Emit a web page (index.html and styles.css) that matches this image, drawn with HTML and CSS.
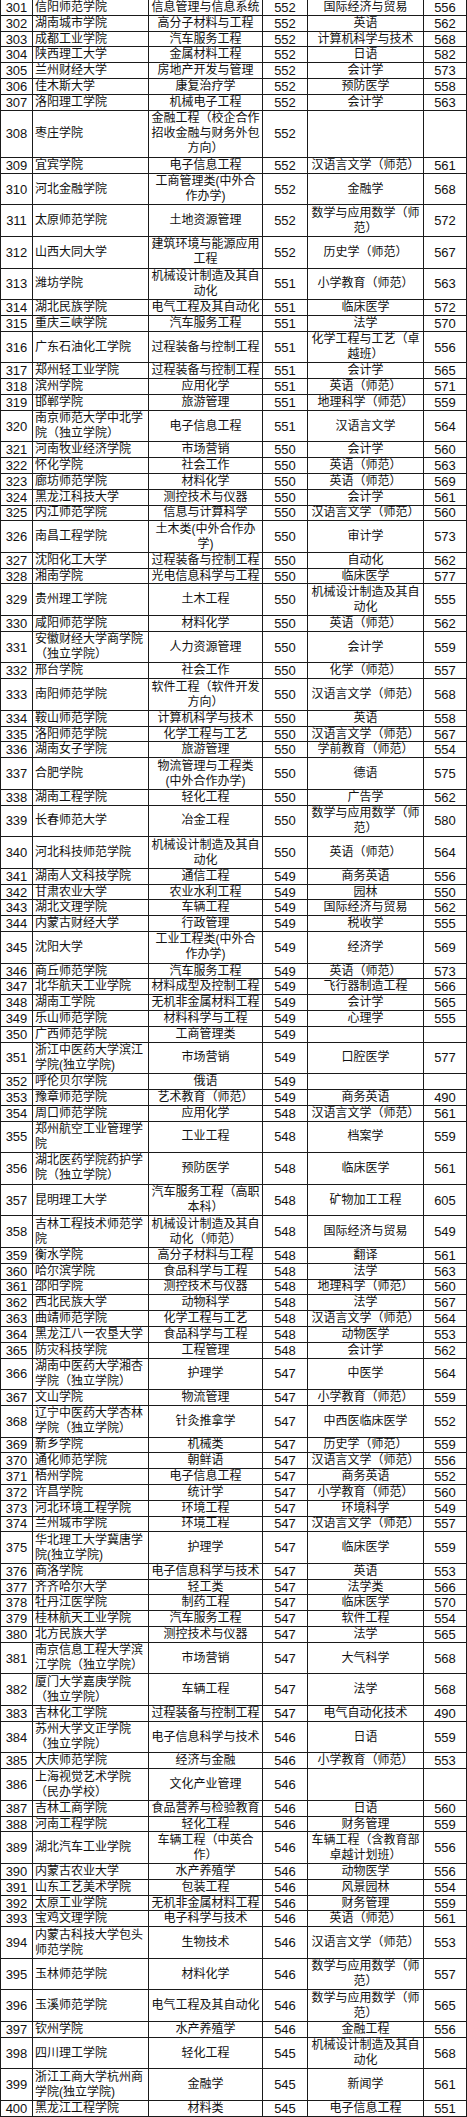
FILE: index.html
```html
<!DOCTYPE html>
<html lang="zh-CN">
<head>
<meta charset="utf-8">
<title>录取分数表</title>
<link rel="stylesheet" href="styles.css">
</head>
<body>
<div class="sheet">
<div class="r"><span>301</span><span>信阳师范学院</span><span>信息管理与信息系统</span><span>552</span><span>国际经济与贸易</span><span>556</span></div>
<div class="r"><span>302</span><span>湖南城市学院</span><span>高分子材料与工程</span><span>552</span><span>英语</span><span>562</span></div>
<div class="r"><span>303</span><span>成都工业学院</span><span>汽车服务工程</span><span>552</span><span>计算机科学与技术</span><span>568</span></div>
<div class="r"><span>304</span><span>陕西理工大学</span><span>金属材料工程</span><span>552</span><span>日语</span><span>582</span></div>
<div class="r"><span>305</span><span>兰州财经大学</span><span>房地产开发与管理</span><span>552</span><span>会计学</span><span>573</span></div>
<div class="r"><span>306</span><span>佳木斯大学</span><span>康复治疗学</span><span>552</span><span>预防医学</span><span>558</span></div>
<div class="r"><span>307</span><span>洛阳理工学院</span><span>机械电子工程</span><span>552</span><span>会计学</span><span>563</span></div>
<div class="r h3"><span>308</span><span>枣庄学院</span><span>金融工程（校企合作<br>招收金融与财务外包<br>方向）</span><span>552</span><span></span><span></span></div>
<div class="r"><span>309</span><span>宜宾学院</span><span>电子信息工程</span><span>552</span><span>汉语言文学（师范）</span><span>561</span></div>
<div class="r h2"><span>310</span><span>河北金融学院</span><span>工商管理类(中外合<br>作办学)</span><span>552</span><span>金融学</span><span>568</span></div>
<div class="r h2"><span>311</span><span>太原师范学院</span><span>土地资源管理</span><span>552</span><span>数学与应用数学（师<br>范）</span><span>572</span></div>
<div class="r h2"><span>312</span><span>山西大同大学</span><span>建筑环境与能源应用<br>工程</span><span>552</span><span>历史学（师范）</span><span>567</span></div>
<div class="r h2"><span>313</span><span>潍坊学院</span><span>机械设计制造及其自<br>动化</span><span>551</span><span>小学教育（师范）</span><span>563</span></div>
<div class="r"><span>314</span><span>湖北民族学院</span><span>电气工程及其自动化</span><span>551</span><span>临床医学</span><span>572</span></div>
<div class="r"><span>315</span><span>重庆三峡学院</span><span>汽车服务工程</span><span>551</span><span>法学</span><span>570</span></div>
<div class="r h2"><span>316</span><span>广东石油化工学院</span><span>过程装备与控制工程</span><span>551</span><span>化学工程与工艺（卓<br>越班）</span><span>556</span></div>
<div class="r"><span>317</span><span>郑州轻工业学院</span><span>过程装备与控制工程</span><span>551</span><span>会计学</span><span>565</span></div>
<div class="r"><span>318</span><span>滨州学院</span><span>应用化学</span><span>551</span><span>英语（师范）</span><span>571</span></div>
<div class="r"><span>319</span><span>邯郸学院</span><span>旅游管理</span><span>551</span><span>地理科学（师范）</span><span>559</span></div>
<div class="r h2"><span>320</span><span>南京师范大学中北学<br>院（独立学院）</span><span>电子信息工程</span><span>551</span><span>汉语言文学</span><span>564</span></div>
<div class="r"><span>321</span><span>河南牧业经济学院</span><span>市场营销</span><span>550</span><span>会计学</span><span>560</span></div>
<div class="r"><span>322</span><span>怀化学院</span><span>社会工作</span><span>550</span><span>英语（师范）</span><span>563</span></div>
<div class="r"><span>323</span><span>廊坊师范学院</span><span>材料化学</span><span>550</span><span>英语（师范）</span><span>569</span></div>
<div class="r"><span>324</span><span>黑龙江科技大学</span><span>测控技术与仪器</span><span>550</span><span>会计学</span><span>561</span></div>
<div class="r"><span>325</span><span>内江师范学院</span><span>信息与计算科学</span><span>550</span><span>汉语言文学（师范）</span><span>560</span></div>
<div class="r h2"><span>326</span><span>南昌工程学院</span><span>土木类(中外合作办<br>学)</span><span>550</span><span>审计学</span><span>573</span></div>
<div class="r"><span>327</span><span>沈阳化工大学</span><span>过程装备与控制工程</span><span>550</span><span>自动化</span><span>562</span></div>
<div class="r"><span>328</span><span>湘南学院</span><span>光电信息科学与工程</span><span>550</span><span>临床医学</span><span>577</span></div>
<div class="r h2"><span>329</span><span>贵州理工学院</span><span>土木工程</span><span>550</span><span>机械设计制造及其自<br>动化</span><span>555</span></div>
<div class="r"><span>330</span><span>咸阳师范学院</span><span>材料化学</span><span>550</span><span>英语（师范）</span><span>562</span></div>
<div class="r h2"><span>331</span><span>安徽财经大学商学院<br>（独立学院）</span><span>人力资源管理</span><span>550</span><span>会计学</span><span>559</span></div>
<div class="r"><span>332</span><span>邢台学院</span><span>社会工作</span><span>550</span><span>化学（师范）</span><span>557</span></div>
<div class="r h2"><span>333</span><span>南阳师范学院</span><span>软件工程（软件开发<br>方向）</span><span>550</span><span>汉语言文学（师范）</span><span>568</span></div>
<div class="r"><span>334</span><span>鞍山师范学院</span><span>计算机科学与技术</span><span>550</span><span>英语</span><span>558</span></div>
<div class="r"><span>335</span><span>洛阳师范学院</span><span>化学工程与工艺</span><span>550</span><span>汉语言文学（师范）</span><span>567</span></div>
<div class="r"><span>336</span><span>湖南女子学院</span><span>旅游管理</span><span>550</span><span>学前教育（师范）</span><span>554</span></div>
<div class="r h2"><span>337</span><span>合肥学院</span><span>物流管理与工程类<br>(中外合作办学)</span><span>550</span><span>德语</span><span>575</span></div>
<div class="r"><span>338</span><span>湖南工程学院</span><span>轻化工程</span><span>550</span><span>广告学</span><span>562</span></div>
<div class="r h2"><span>339</span><span>长春师范大学</span><span>冶金工程</span><span>550</span><span>数学与应用数学（师<br>范）</span><span>580</span></div>
<div class="r h2"><span>340</span><span>河北科技师范学院</span><span>机械设计制造及其自<br>动化</span><span>550</span><span>英语（师范）</span><span>564</span></div>
<div class="r"><span>341</span><span>湖南人文科技学院</span><span>通信工程</span><span>549</span><span>商务英语</span><span>556</span></div>
<div class="r"><span>342</span><span>甘肃农业大学</span><span>农业水利工程</span><span>549</span><span>园林</span><span>550</span></div>
<div class="r"><span>343</span><span>湖北文理学院</span><span>车辆工程</span><span>549</span><span>国际经济与贸易</span><span>562</span></div>
<div class="r"><span>344</span><span>内蒙古财经大学</span><span>行政管理</span><span>549</span><span>税收学</span><span>555</span></div>
<div class="r h2"><span>345</span><span>沈阳大学</span><span>工业工程类(中外合<br>作办学)</span><span>549</span><span>经济学</span><span>569</span></div>
<div class="r"><span>346</span><span>商丘师范学院</span><span>汽车服务工程</span><span>549</span><span>英语（师范）</span><span>573</span></div>
<div class="r"><span>347</span><span>北华航天工业学院</span><span>材料成型及控制工程</span><span>549</span><span>飞行器制造工程</span><span>566</span></div>
<div class="r"><span>348</span><span>湖南工学院</span><span>无机非金属材料工程</span><span>549</span><span>会计学</span><span>565</span></div>
<div class="r"><span>349</span><span>乐山师范学院</span><span>材料科学与工程</span><span>549</span><span>心理学</span><span>555</span></div>
<div class="r"><span>350</span><span>广西师范学院</span><span>工商管理类</span><span>549</span><span></span><span></span></div>
<div class="r h2"><span>351</span><span>浙江中医药大学滨江<br>学院(独立学院)</span><span>市场营销</span><span>549</span><span>口腔医学</span><span>577</span></div>
<div class="r"><span>352</span><span>呼伦贝尔学院</span><span>俄语</span><span>549</span><span></span><span></span></div>
<div class="r"><span>353</span><span>豫章师范学院</span><span>艺术教育（师范）</span><span>549</span><span>商务英语</span><span>490</span></div>
<div class="r"><span>354</span><span>周口师范学院</span><span>应用化学</span><span>548</span><span>汉语言文学（师范）</span><span>561</span></div>
<div class="r h2"><span>355</span><span>郑州航空工业管理学<br>院</span><span>工业工程</span><span>548</span><span>档案学</span><span>559</span></div>
<div class="r h2"><span>356</span><span>湖北医药学院药护学<br>院（独立学院）</span><span>预防医学</span><span>548</span><span>临床医学</span><span>561</span></div>
<div class="r h2"><span>357</span><span>昆明理工大学</span><span>汽车服务工程（高职<br>本科）</span><span>548</span><span>矿物加工工程</span><span>605</span></div>
<div class="r h2"><span>358</span><span>吉林工程技术师范学<br>院</span><span>机械设计制造及其自<br>动化（师范）</span><span>548</span><span>国际经济与贸易</span><span>549</span></div>
<div class="r"><span>359</span><span>衡水学院</span><span>高分子材料与工程</span><span>548</span><span>翻译</span><span>561</span></div>
<div class="r"><span>360</span><span>哈尔滨学院</span><span>食品科学与工程</span><span>548</span><span>法学</span><span>563</span></div>
<div class="r"><span>361</span><span>邵阳学院</span><span>测控技术与仪器</span><span>548</span><span>地理科学（师范）</span><span>560</span></div>
<div class="r"><span>362</span><span>西北民族大学</span><span>动物科学</span><span>548</span><span>法学</span><span>567</span></div>
<div class="r"><span>363</span><span>曲靖师范学院</span><span>化学工程与工艺</span><span>548</span><span>汉语言文学（师范）</span><span>564</span></div>
<div class="r"><span>364</span><span>黑龙江八一农垦大学</span><span>食品科学与工程</span><span>548</span><span>动物医学</span><span>553</span></div>
<div class="r"><span>365</span><span>防灾科技学院</span><span>工程管理</span><span>548</span><span>会计学</span><span>562</span></div>
<div class="r h2"><span>366</span><span>湖南中医药大学湘杏<br>学院（独立学院）</span><span>护理学</span><span>547</span><span>中医学</span><span>564</span></div>
<div class="r"><span>367</span><span>文山学院</span><span>物流管理</span><span>547</span><span>小学教育（师范）</span><span>559</span></div>
<div class="r h2"><span>368</span><span>辽宁中医药大学杏林<br>学院（独立学院）</span><span>针灸推拿学</span><span>547</span><span>中西医临床医学</span><span>552</span></div>
<div class="r"><span>369</span><span>新乡学院</span><span>机械类</span><span>547</span><span>历史学（师范）</span><span>559</span></div>
<div class="r"><span>370</span><span>通化师范学院</span><span>朝鲜语</span><span>547</span><span>汉语言文学（师范）</span><span>556</span></div>
<div class="r"><span>371</span><span>梧州学院</span><span>电子信息工程</span><span>547</span><span>商务英语</span><span>552</span></div>
<div class="r"><span>372</span><span>许昌学院</span><span>统计学</span><span>547</span><span>小学教育（师范）</span><span>560</span></div>
<div class="r"><span>373</span><span>河北环境工程学院</span><span>环境工程</span><span>547</span><span>环境科学</span><span>549</span></div>
<div class="r"><span>374</span><span>兰州城市学院</span><span>环境工程</span><span>547</span><span>汉语言文学（师范）</span><span>557</span></div>
<div class="r h2"><span>375</span><span>华北理工大学冀唐学<br>院(独立学院)</span><span>护理学</span><span>547</span><span>临床医学</span><span>559</span></div>
<div class="r"><span>376</span><span>商洛学院</span><span>电子信息科学与技术</span><span>547</span><span>英语</span><span>553</span></div>
<div class="r"><span>377</span><span>齐齐哈尔大学</span><span>轻工类</span><span>547</span><span>法学类</span><span>566</span></div>
<div class="r"><span>378</span><span>牡丹江医学院</span><span>制药工程</span><span>547</span><span>临床医学</span><span>570</span></div>
<div class="r"><span>379</span><span>桂林航天工业学院</span><span>汽车服务工程</span><span>547</span><span>软件工程</span><span>554</span></div>
<div class="r"><span>380</span><span>北方民族大学</span><span>测控技术与仪器</span><span>547</span><span>法学</span><span>565</span></div>
<div class="r h2"><span>381</span><span>南京信息工程大学滨<br>江学院（独立学院）</span><span>市场营销</span><span>547</span><span>大气科学</span><span>568</span></div>
<div class="r h2"><span>382</span><span>厦门大学嘉庚学院<br>（独立学院）</span><span>车辆工程</span><span>547</span><span>法学</span><span>568</span></div>
<div class="r"><span>383</span><span>吉林化工学院</span><span>过程装备与控制工程</span><span>547</span><span>电气自动化技术</span><span>490</span></div>
<div class="r h2"><span>384</span><span>苏州大学文正学院<br>（独立学院）</span><span>电子信息科学与技术</span><span>546</span><span>日语</span><span>559</span></div>
<div class="r"><span>385</span><span>大庆师范学院</span><span>经济与金融</span><span>546</span><span>小学教育（师范）</span><span>553</span></div>
<div class="r h2"><span>386</span><span>上海视觉艺术学院<br>（民办学校）</span><span>文化产业管理</span><span>546</span><span></span><span></span></div>
<div class="r"><span>387</span><span>吉林工商学院</span><span>食品营养与检验教育</span><span>546</span><span>日语</span><span>560</span></div>
<div class="r"><span>388</span><span>河南工程学院</span><span>轻化工程</span><span>546</span><span>财务管理</span><span>559</span></div>
<div class="r h2"><span>389</span><span>湖北汽车工业学院</span><span>车辆工程（中英合<br>作）</span><span>546</span><span>车辆工程（含教育部<br>卓越计划班）</span><span>556</span></div>
<div class="r"><span>390</span><span>内蒙古农业大学</span><span>水产养殖学</span><span>546</span><span>动物医学</span><span>556</span></div>
<div class="r"><span>391</span><span>山东工艺美术学院</span><span>包装工程</span><span>546</span><span>风景园林</span><span>554</span></div>
<div class="r"><span>392</span><span>太原工业学院</span><span>无机非金属材料工程</span><span>546</span><span>财务管理</span><span>559</span></div>
<div class="r"><span>393</span><span>宝鸡文理学院</span><span>电子科学与技术</span><span>546</span><span>英语（师范）</span><span>561</span></div>
<div class="r h2"><span>394</span><span>内蒙古科技大学包头<br>师范学院</span><span>生物技术</span><span>546</span><span>汉语言文学（师范）</span><span>553</span></div>
<div class="r h2"><span>395</span><span>玉林师范学院</span><span>材料化学</span><span>546</span><span>数学与应用数学（师<br>范）</span><span>557</span></div>
<div class="r h2"><span>396</span><span>玉溪师范学院</span><span>电气工程及其自动化</span><span>546</span><span>数学与应用数学（师<br>范）</span><span>565</span></div>
<div class="r"><span>397</span><span>钦州学院</span><span>水产养殖学</span><span>546</span><span>金融工程</span><span>556</span></div>
<div class="r h2"><span>398</span><span>四川理工学院</span><span>轻化工程</span><span>545</span><span>机械设计制造及其自<br>动化</span><span>568</span></div>
<div class="r h2"><span>399</span><span>浙江工商大学杭州商<br>学院(独立学院)</span><span>金融学</span><span>545</span><span>新闻学</span><span>561</span></div>
<div class="r"><span>400</span><span>黑龙江工程学院</span><span>材料类</span><span>545</span><span>电子信息工程</span><span>551</span></div>
</div>
</body>
</html>
```

FILE: styles.css
```css
html, body {
  margin: 0;
  padding: 0;
  background: #ffffff;
}

body {
  font-family: "Liberation Sans", "Noto Sans CJK SC", sans-serif;
  font-size: 12px;
  color: #111111;
}

.sheet {
  width: 467px;
}

.r {
  display: grid;
  grid-template-columns: 33px 116px 114px 45px 116px 43px;
  height: 15.8px;
}

.r.h2 {
  height: 31.6px;
}

.r.h3 {
  height: 47.4px;
}

.r > span {
  box-sizing: border-box;
  display: flex;
  align-items: center;
  justify-content: center;
  text-align: center;
  border-right: 1px solid #1a1a1a;
  border-bottom: 1px solid #1a1a1a;
  line-height: 15px;
  white-space: nowrap;
  overflow: hidden;
  padding: 0 1px;
}

.r > span:first-child {
  border-left: 1px solid #1a1a1a;
}

.r > span:nth-child(1),
.r > span:nth-child(4),
.r > span:nth-child(6) {
  font-size: 13px;
}

.r > span:nth-child(2) {
  justify-content: flex-start;
  text-align: left;
  padding-left: 2px;
}
```
